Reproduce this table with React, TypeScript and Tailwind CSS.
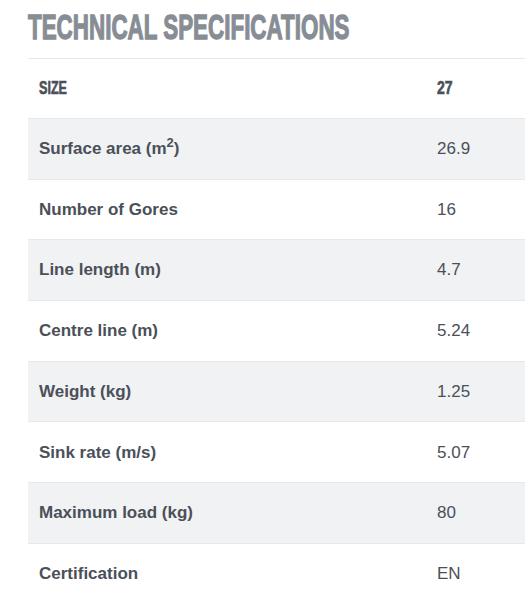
const specs: { label: React.ReactNode; value: string }[] = [
  { label: <>Surface area (m<sup className="relative -top-[7px] text-[13px] leading-none">2</sup>)</>, value: '26.9' },
  { label: 'Number of Gores', value: '16' },
  { label: 'Line length (m)', value: '4.7' },
  { label: 'Centre line (m)', value: '5.24' },
  { label: 'Weight (kg)', value: '1.25' },
  { label: 'Sink rate (m/s)', value: '5.07' },
  { label: 'Maximum load (kg)', value: '80' },
  { label: 'Certification', value: 'EN' },
];

export default function App() {
  return (
    <div className="min-h-[600px] w-[525px] overflow-hidden bg-white font-['Liberation_Sans',Arial,sans-serif] text-[#4b5058]">
      {/* condensed heading: no condensed face installed, so squeeze a bold one */}
      <h2 className="ml-[28px] pt-[9px] h-[43px] whitespace-nowrap">
        <span className="inline-block origin-left scale-x-[0.64] text-[35px] leading-[36px] font-bold uppercase text-[#878d95] [-webkit-text-stroke:1.3px_#878d95]">
          Technical Specifications
        </span>
      </h2>

      <div className="ml-[28px] mt-[15px] w-[520px] border-t border-[#e6e8eb]">
        <div className="flex h-[60px] items-center border-b border-[#e6e8eb]">
          <div className="w-[409px] pl-[11px]">
            <span className="inline-block origin-left scale-x-[0.7] text-[18px] font-bold uppercase [-webkit-text-stroke:0.6px_#4b5058]">Size</span>
          </div>
          <span className="inline-block origin-left scale-x-[0.78] text-[18px] font-bold [-webkit-text-stroke:0.6px_#4b5058]">27</span>
        </div>
        {specs.map((s, i) => (
          <div
            key={i}
            className={`flex h-[60.7px] items-center border-b border-[#e6e8eb] ${i % 2 === 0 ? 'bg-[#f0f2f4]' : 'bg-white'}`}
          >
            <div className="w-[409px] pl-[11px] text-[17px] font-bold">{s.label}</div>
            <div className="text-[17px]">{s.value}</div>
          </div>
        ))}
      </div>
    </div>
  );
}
